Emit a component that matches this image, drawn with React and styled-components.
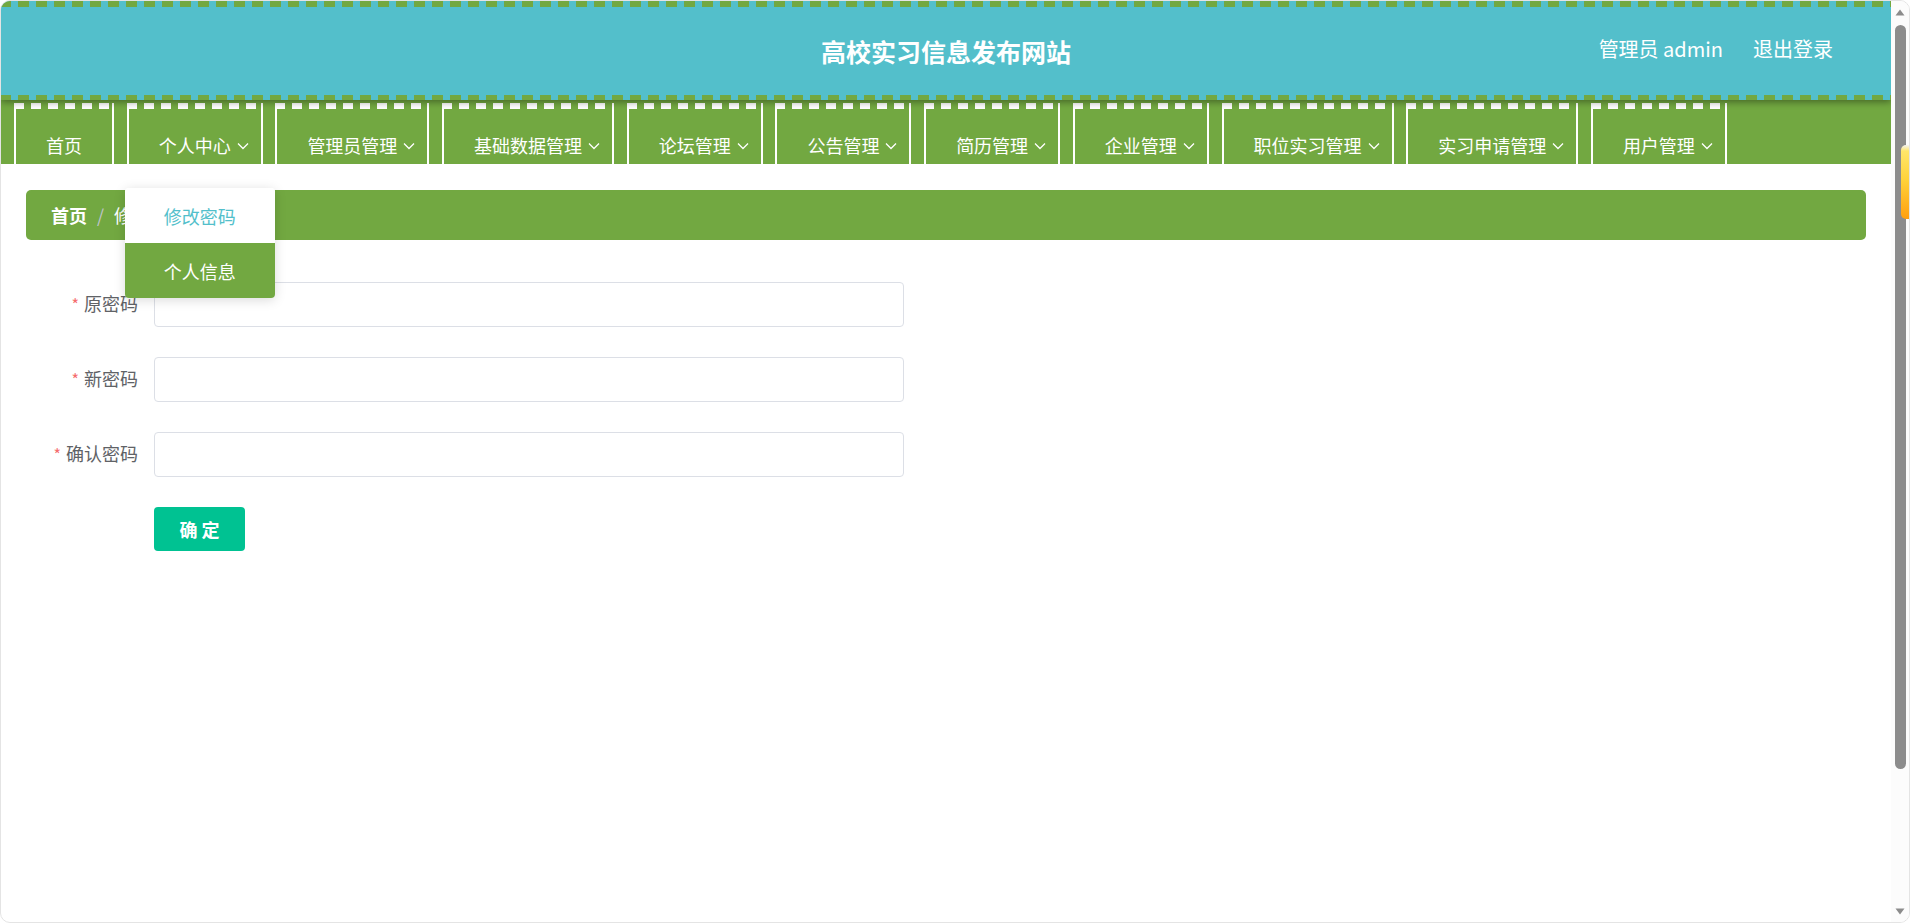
import React from "react";
import styled, { createGlobalStyle } from "styled-components";

const GlobalStyle = createGlobalStyle`
  html, body {
    margin: 0;
    padding: 0;
    height: 100%;
    overflow: hidden;
    background: #ffffff;
  }
  body {
    font-family: "Noto Sans CJK SC", "Noto Sans", sans-serif;
  }
  #root {
    height: 100%;
  }
  * {
    box-sizing: border-box;
  }
`;

const CYAN = "#53bfcb";
const GREEN = "#72a841";
const BAR = "#8c8c8c";

const Frame = styled.div`
  position: relative;
  height: 100vh;
  display: flex;
  border: 1px solid #e4e4e4;
  border-radius: 10px;
  overflow: hidden;
  background: #fff;
`;

const Content = styled.div`
  flex: 1;
  min-width: 0;
  overflow: hidden;
  display: flex;
  flex-direction: column;
`;

const Rail = styled.div`
  width: 18px;
  flex-shrink: 0;
  display: flex;
  flex-direction: column;
  align-items: center;
  background: #fcfcfc;
  padding: 8px 0 7px;
`;

const RailArrow = styled.svg`
  width: 10px;
  height: 7px;
  flex-shrink: 0;
`;

const Track = styled.div`
  flex: 1;
  width: 100%;
  padding: 9px 3px 0 4px;
  display: flex;
  flex-direction: column;
`;

const Thumb = styled.div`
  height: 744px;
  width: 11px;
  border-radius: 6px;
  background: ${BAR};
`;

const SideTab = styled.div`
  position: absolute;
  right: 0;
  top: 144px;
  width: 8px;
  height: 74px;
  border-radius: 5px 0 0 5px;
  background: linear-gradient(180deg, #f4f4f4 0px, #ffe66a 6px, #ffd23a 35px, #ff9f10 100%);
`;

const Header = styled.header`
  position: relative;
  z-index: 2;
  height: 99px;
  flex-shrink: 0;
  display: flex;
  align-items: center;
  justify-content: center;
  background:
    repeating-linear-gradient(90deg, ${GREEN} 0 10px, transparent 10px 17px, ${GREEN} 17px 18px) top left / 100% 6px no-repeat,
    repeating-linear-gradient(90deg, ${GREEN} 0 10px, transparent 10px 17px, ${GREEN} 17px 18px) bottom left / 100% 5px no-repeat,
    ${CYAN};
  box-shadow: 0 2px 7px rgba(0, 0, 0, 0.4);
`;

const Title = styled.h1`
  margin: 0;
  font-size: 25px;
  font-weight: 700;
  color: #fff;
`;

const UserBox = styled.div`
  position: absolute;
  right: 58px;
  top: 0;
  bottom: 4px;
  display: flex;
  align-items: center;
  gap: 30px;
  color: #fff;
  font-size: 20px;
`;

const UserLink = styled.span`
  cursor: pointer;
`;

const NavBar = styled.nav`
  position: relative;
  z-index: 1;
  height: 64px;
  flex-shrink: 0;
  background: ${GREEN};
  display: flex;
  align-items: flex-end;
  gap: 12.7px;
  padding-left: 13px;
`;

const NavItem = styled.div`
  position: relative;
  height: 61px;
  padding: 18px 30px 0;
  border-left: 2px solid #fff;
  border-right: 2px solid #fff;
  color: #fff;
  font-size: 18px;
  line-height: 36px;
  white-space: nowrap;
  cursor: pointer;
  &::before {
    content: "";
    position: absolute;
    top: 0;
    left: -2px;
    right: -2px;
    height: 6px;
    background: repeating-linear-gradient(90deg, #fff 0 10px, transparent 10px 17px);
  }
`;

const ItemInner = styled.div`
  margin-top: 6px;
  height: 36px;
  display: flex;
  align-items: center;
`;

const Arrow = styled.svg`
  position: absolute;
  right: 12px;
  top: 39px;
  width: 12px;
  height: 8px;
`;

const Dropdown = styled.div`
  position: absolute;
  top: calc(100% + 24px);
  left: -4px;
  width: 150px;
  background: #fff;
  border-radius: 4px;
  box-shadow: 0 2px 12px rgba(0, 0, 0, 0.15);
  overflow: hidden;
  z-index: 10;
`;

const DropItem = styled.div`
  height: 55px;
  display: flex;
  align-items: center;
  justify-content: center;
  font-size: 18px;
  color: ${(p) => (p.$active ? "#fff" : CYAN)};
  background: ${(p) => (p.$active ? GREEN : "#fff")};
`;

const Main = styled.main`
  padding: 26px 25px 0 25px;
`;

const Breadcrumb = styled.div`
  height: 50px;
  border-radius: 5px;
  background: ${GREEN};
  display: flex;
  align-items: center;
  padding-left: 25px;
  font-size: 18px;
  color: #fff;
`;

const Crumb = styled.span`
  font-weight: ${(p) => (p.$bold ? 700 : 400)};
`;

const Sep = styled.span`
  margin: 0 10px;
  color: #c0c4cc;
`;

const Form = styled.form`
  margin-top: 42px;
  display: flex;
  flex-direction: column;
  gap: 30px;
`;

const Row = styled.div`
  display: flex;
  align-items: center;
`;

const Label = styled.label`
  width: 128px;
  padding-right: 16px;
  padding-bottom: 3px;
  text-align: right;
  font-size: 18px;
  line-height: 24px;
  color: #606266;
`;

const Star = styled.span`
  color: #f56c6c;
  margin-right: 5px;
  font-size: 16px;
`;

const Input = styled.input`
  width: 750px;
  height: 45px;
  border: 1px solid #dcdfe6;
  border-radius: 4px;
  outline: none;
  padding: 0 15px;
  font-size: 16px;
  background: #fff;
`;

const Submit = styled.button`
  margin-left: 128px;
  width: 91px;
  height: 44px;
  border: none;
  border-radius: 4px;
  background: #00c292;
  color: #fff;
  font-family: inherit;
  font-size: 18px;
  font-weight: 700;
  cursor: pointer;
`;

const navItems = [
  { label: "首页" },
  { label: "个人中心", arrow: true, open: true },
  { label: "管理员管理", arrow: true },
  { label: "基础数据管理", arrow: true },
  { label: "论坛管理", arrow: true },
  { label: "公告管理", arrow: true },
  { label: "简历管理", arrow: true },
  { label: "企业管理", arrow: true },
  { label: "职位实习管理", arrow: true },
  { label: "实习申请管理", arrow: true },
  { label: "用户管理", arrow: true },
];

const ChevronDown = () => (
  <Arrow viewBox="0 0 12 8" fill="none">
    <polyline points="1,1.5 6,6.5 11,1.5" stroke="#fff" strokeWidth="1.3" />
  </Arrow>
);

export default function App() {
  return (
    <>
      <GlobalStyle />
      <Frame>
        <Content>
          <Header>
            <Title>高校实习信息发布网站</Title>
            <UserBox>
              <UserLink>管理员 admin</UserLink>
              <UserLink>退出登录</UserLink>
            </UserBox>
          </Header>
          <NavBar>
            {navItems.map((it) => (
              <NavItem key={it.label}>
                <ItemInner>{it.label}</ItemInner>
                {it.arrow && <ChevronDown />}
                {it.open && (
                  <Dropdown>
                    <DropItem>修改密码</DropItem>
                    <DropItem $active>个人信息</DropItem>
                  </Dropdown>
                )}
              </NavItem>
            ))}
          </NavBar>
          <Main>
            <Breadcrumb>
              <Crumb $bold>首页</Crumb>
              <Sep>/</Sep>
              <Crumb>修改密码</Crumb>
            </Breadcrumb>
            <Form onSubmit={(e) => e.preventDefault()}>
              <Row>
                <Label><Star>*</Star>原密码</Label>
                <Input type="password" />
              </Row>
              <Row>
                <Label><Star>*</Star>新密码</Label>
                <Input type="password" />
              </Row>
              <Row>
                <Label><Star>*</Star>确认密码</Label>
                <Input type="password" />
              </Row>
              <Row>
                <Submit type="submit">确 定</Submit>
              </Row>
            </Form>
          </Main>
        </Content>
        <Rail>
          <RailArrow viewBox="0 0 10 7">
            <polygon points="5,0.5 9.5,6.5 0.5,6.5" fill={BAR} />
          </RailArrow>
          <Track>
            <Thumb />
          </Track>
          <RailArrow viewBox="0 0 10 7">
            <polygon points="0.5,0.5 9.5,0.5 5,6.5" fill={BAR} />
          </RailArrow>
        </Rail>
        <SideTab />
      </Frame>
    </>
  );
}
